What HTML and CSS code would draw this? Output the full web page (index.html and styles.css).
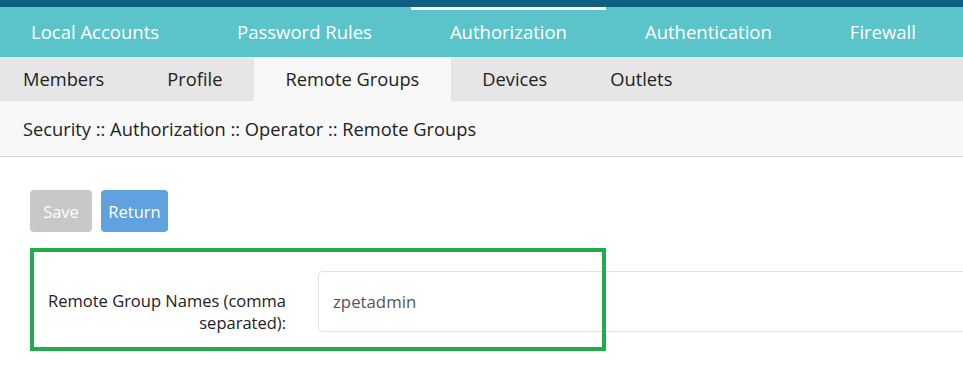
FILE: index.html
```html
<!DOCTYPE html>
<html lang="en">
<head>
    <meta charset="UTF-8">
    <title>Security :: Authorization</title>
    <link rel="stylesheet" href="styles.css">
</head>
<body>

    <div class="topbar"></div>

    <ul class="main-tabs">
        <li>Local Accounts</li>
        <li>Password Rules</li>
        <li class="active">Authorization</li>
        <li>Authentication</li>
        <li>Firewall</li>
    </ul>

    <ul class="sub-tabs">
        <li>Members</li>
        <li>Profile</li>
        <li class="active">Remote Groups</li>
        <li>Devices</li>
        <li>Outlets</li>
    </ul>

    <div class="breadcrumb">Security :: Authorization :: Operator :: Remote Groups</div>

    <div class="content">
        <div class="buttons">
            <button class="btn btn-save">Save</button>
            <button class="btn btn-return">Return</button>
        </div>

        <div class="form-row">
            <label class="form-label">Remote Group Names (comma<br>separated):</label>
            <div class="form-input">zpetadmin</div>
            <!-- highlight box -->
            <div class="highlight"></div>
        </div>
    </div>

</body>
</html>
```

FILE: styles.css
```css
body {
    margin: 0;
    font-family: 'Open Sans', 'Noto Sans', sans-serif;
    color: #222;
    background-color: #fff;
}

.topbar {
    height: 7px;
    background-color: #0f5f82;
}

/* main tabs */
.main-tabs {
    display: flex;
    list-style: none;
    margin: 0 0 0 -8px;
    padding: 0;
    height: 50px;
    background-color: #5bc4ca;
}

.main-tabs li {
    padding: 0 39px;
    line-height: 50px;
    font-size: 18.5px;
    color: #fff;
    white-space: nowrap;
}

.main-tabs li.active {
    position: relative;
}

.main-tabs li.active::before {
    content: "";
    position: absolute;
    left: 0;
    right: 0;
    top: 0;
    height: 3px;
    background-color: #fff;
}

/* sub tabs */
.sub-tabs {
    display: flex;
    list-style: none;
    margin: 0 0 0 -8px;
    padding: 0;
    height: 44px;
    background-color: #e6e6e6;
}

.sub-tabs li {
    padding: 0 32px 0 31px;
    line-height: 44px;
    font-size: 18.3px;
    color: #222;
    white-space: nowrap;
}

.sub-tabs li.active {
    background-color: #f8f8f8;
}

.breadcrumb {
    height: 55px;
    line-height: 55px;
    padding-left: 23px;
    background-color: #f8f8f8;
    border-bottom: 1px solid #dadada;
    font-size: 18.3px;
}

.content {
    padding: 33px 0 40px 30px;
}

.buttons {
    display: flex;
    gap: 9px;
}

.btn {
    height: 42px;
    border: none;
    border-radius: 4px;
    color: #fff;
    font-family: inherit;
    font-size: 16.5px;
    padding: 0;
}

.btn-save {
    width: 62px;
    background-color: #c8c8c8;
}

.btn-return {
    width: 67px;
    background-color: #5fa2df;
}

.form-row {
    position: relative;
    display: flex;
    align-items: center;
    margin-top: 39px;
    height: 61px;
}

.form-label {
    width: 256px;
    text-align: right;
    font-size: 16.5px;
    line-height: 22px;
    padding-top: 20px;
}

.form-input {
    margin-left: 32px;
    flex: 1;
    height: 59px;
    line-height: 59px;
    border: 1px solid #e2e2e2;
    border-right: none;
    border-radius: 5px 0 0 5px;
    padding-left: 14px;
    font-size: 16.8px;
    color: #555;
}

.highlight {
    position: absolute;
    left: 0;
    top: -23px;
    width: 568px;
    height: 95px;
    border: 4px solid #22ab4b;
}
```
